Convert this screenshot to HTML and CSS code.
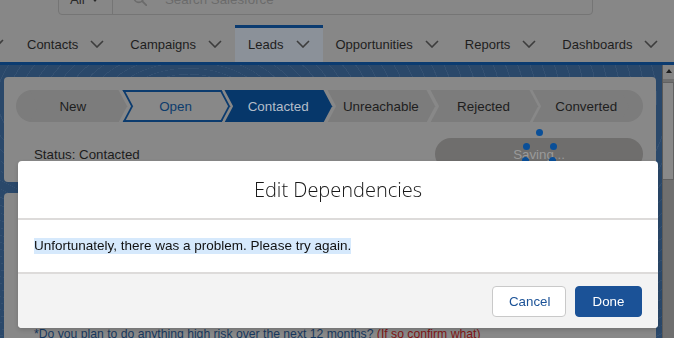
FILE: index.html
```html
<!DOCTYPE html>
<html lang="en">
<head>
    <meta charset="UTF-8">
    <meta name="viewport" content="width=device-width, initial-scale=1.0">
    <title>Lead - Edit Dependencies</title>
    <link rel="stylesheet" href="styles.css">
</head>
<body>
    <header class="top">
        <div class="search">
            <div class="scope">
                <span>All</span>
                <svg class="caret" viewBox="0 0 8 5" width="8" height="5"><path d="M0 0h8L4 5z" fill="currentColor"/></svg>
            </div>
            <div class="query">
                <svg viewBox="0 0 14 14" width="14" height="14"><circle cx="5.8" cy="5.8" r="4.6" fill="none" stroke="currentColor" stroke-width="1.6"/><path d="M9.2 9.2l4 4" stroke="currentColor" stroke-width="1.8" stroke-linecap="round"/></svg>
                <span>Search Salesforce</span>
            </div>
        </div>
    </header>

    <nav class="tabs">
        <span class="tab-tail"><svg class="chev" viewBox="0 0 14 8" width="14" height="8"><path d="M1 1l6 6 6-6" fill="none" stroke="currentColor" stroke-width="1.6"/></svg></span>
        <a class="tab">Contacts<svg class="chev" viewBox="0 0 14 8" width="14" height="8"><path d="M1 1l6 6 6-6" fill="none" stroke="currentColor" stroke-width="1.6"/></svg></a>
        <a class="tab">Campaigns<svg class="chev" viewBox="0 0 14 8" width="14" height="8"><path d="M1 1l6 6 6-6" fill="none" stroke="currentColor" stroke-width="1.6"/></svg></a>
        <a class="tab active">Leads<svg class="chev" viewBox="0 0 14 8" width="14" height="8"><path d="M1 1l6 6 6-6" fill="none" stroke="currentColor" stroke-width="1.6"/></svg></a>
        <a class="tab">Opportunities<svg class="chev" viewBox="0 0 14 8" width="14" height="8"><path d="M1 1l6 6 6-6" fill="none" stroke="currentColor" stroke-width="1.6"/></svg></a>
        <a class="tab">Reports<svg class="chev" viewBox="0 0 14 8" width="14" height="8"><path d="M1 1l6 6 6-6" fill="none" stroke="currentColor" stroke-width="1.6"/></svg></a>
        <a class="tab">Dashboards<svg class="chev" viewBox="0 0 14 8" width="14" height="8"><path d="M1 1l6 6 6-6" fill="none" stroke="currentColor" stroke-width="1.6"/></svg></a>
    </nav>

    <main class="workspace">
        <div class="columns">
            <section class="card highlights">
                <ol class="path">
                    <li class="step">New</li>
                    <li class="step step-open">Open</li>
                    <li class="step step-current">Contacted</li>
                    <li class="step">Unreachable</li>
                    <li class="step">Rejected</li>
                    <li class="step">Converted</li>
                </ol>
                <div class="status-row">
                    <span class="status">Status: Contacted</span>
                    <button class="saving">
                        Saving...
                        <span class="spinner">
                            <i class="dot d1"></i><i class="dot d2"></i><i class="dot d3"></i><i class="dot d4"></i><i class="dot d5"></i>
                        </span>
                    </button>
                </div>
            </section>
            <section class="card details">
                <p class="question">*Do you plan to do anything high risk over the next 12 months? <span class="hint">(If so confirm what)</span></p>
            </section>
        </div>
        <div class="scrollbar">
            <span class="arrow"></span>
            <span class="thumb"></span>
        </div>
    </main>

    <div class="modal">
        <div class="modal-header">
            <h2>Edit Dependencies</h2>
        </div>
        <div class="modal-body">
            <span class="message">Unfortunately, there was a problem. Please try again.</span>
        </div>
        <div class="modal-footer">
            <button class="btn btn-neutral">Cancel</button>
            <button class="btn btn-brand">Done</button>
        </div>
    </div>
</body>
</html>
```

FILE: styles.css
```css
body {
    margin: 0;
    height: 338px;
    overflow: hidden;
    background-color: #878787;
    font-family: "Liberation Sans", Arial, sans-serif;
    font-size: 13.3px;
    color: #1c1c1c;
}

/* global header */
.top {
    height: 25px;
    padding: 0 0 10px 58px;
    box-sizing: border-box;
    display: flex;
    align-items: flex-end;
}
.search {
    flex: none;
    display: flex;
    width: 535px;
    height: 32px;
    border: 1px solid #757575;
    border-radius: 4px;
    box-sizing: border-box;
}
.scope {
    width: 54px;
    padding-left: 11px;
    box-sizing: border-box;
    display: flex;
    align-items: center;
    gap: 6px;
    border-right: 1px solid #757575;
    color: #2a2a2a;
}
.query {
    display: flex;
    align-items: center;
    gap: 18px;
    padding-left: 20px;
    color: #6b6b6b;
}

/* app nav */
.tabs {
    display: flex;
    height: 37px;
    border-bottom: 3px solid #0b3b70;
    white-space: nowrap;
    overflow: hidden;
    font-size: 13px;
}
.tab-tail {
    display: flex;
    align-items: center;
    margin-left: -10px;
    padding: 0 10px 2px 0;
    color: #3d3d3d;
}
.tab {
    display: flex;
    align-items: center;
    gap: 12px;
    padding: 0 13px 2px;
    border-top: 3px solid transparent;
    color: #1e1e1e;
}
.tab.active {
    background-color: #8b9199;
    border-top-color: #0b3b70;
}
.chev {
    color: #3d3d3d;
}

/* workspace */
.workspace {
    display: flex;
    height: 273px;
    background:
        repeating-radial-gradient(ellipse at 28% 12%, transparent 0 11px, rgba(255,255,255,0.05) 11px 12px),
        #2a486a;
}
.columns {
    flex: 1;
    display: flex;
    flex-direction: column;
    gap: 11px;
    padding: 12px 6px 0 4px;
}
.card {
    background-color: #888;
    border-radius: 4px;
}
.highlights {
    padding: 13px 13px 12px 12px;
}

/* path */
.path {
    display: flex;
    height: 32px;
    margin: 0;
    padding: 0;
    list-style: none;
}
.step {
    position: relative;
    z-index: 0;
    flex: 1 1 0;
    display: flex;
    align-items: center;
    justify-content: center;
    margin: 0 7px 0 6px;
    color: #1e1e1e;
    font-size: 13.4px;
}
.step::before,
.step::after {
    content: "";
    position: absolute;
    z-index: -1;
    left: -4px;
    right: -5px;
    background-color: #7c7c7c;
    box-sizing: border-box;
}
.step::before {
    top: 0;
    height: calc(50% + 1px);
    transform: skewX(28deg);
}
.step::after {
    bottom: 0;
    height: 50%;
    transform: skewX(-28deg);
}
.step:first-child {
    margin-left: 0;
    padding-left: 12px;
    border-radius: 16px 0 0 16px;
    background-color: #7c7c7c;
}
.step:first-child::before,
.step:first-child::after {
    left: 18px;
}
.step:last-child {
    margin-right: 0;
    padding-right: 12px;
    border-radius: 0 16px 16px 0;
    background-color: #7c7c7c;
}
.step:last-child::before,
.step:last-child::after {
    right: 18px;
}
.step-open {
    color: #0d3c6d;
}
.step-open::before,
.step-open::after {
    background-color: #888;
    border: 2px solid #0b3b6e;
}
.step-open::before {
    border-bottom: 0;
}
.step-open::after {
    border-top: 0;
}
.step-current {
    color: #b3bdc9;
}
.step-current::before,
.step-current::after {
    background-color: #06376a;
}

.status-row {
    display: flex;
    align-items: center;
    justify-content: space-between;
    margin-top: 16px;
}
.status {
    padding-left: 18px;
    font-size: 13.3px;
}
.saving {
    position: relative;
    width: 208px;
    height: 32px;
    border: 0;
    border-radius: 16px;
    background-color: #6f6e6d;
    color: #9a9a9a;
    font: inherit;
}
.spinner {
    position: absolute;
    left: calc(50% - 20px);
    top: -10px;
    width: 40px;
    height: 40px;
}
.dot {
    position: absolute;
    width: 7px;
    height: 7px;
    margin: -3.5px 0 0 -3.5px;
    border-radius: 50%;
    background-color: #0a4f98;
}
.d1 { left: 20px; top: 4px; }
.d2 { left: 7px; top: 18px; }
.d3 { left: 34px; top: 18px; }
.d4 { left: 6px; top: 32px; }
.d5 { left: 33px; top: 32px; }

.details {
    flex: 1;
    padding: 132px 30px 0;
}
.question {
    margin: 0;
    color: #17385e;
    font-size: 12.2px;
    line-height: 18px;
}
.hint {
    color: #7f1515;
}

.scrollbar {
    width: 11px;
    display: flex;
    flex-direction: column;
    background-color: #6f6f6f;
    border-left: 1px solid #5a5a5a;
}
.arrow {
    height: 14px;
    background-color: #858585;
    position: relative;
}
.arrow::after {
    content: "";
    position: absolute;
    left: 3px;
    top: 4px;
    border: 3px solid transparent;
    border-bottom: 4px solid #1e1e1e;
    border-top: 0;
}
.thumb {
    height: 96px;
    margin-top: 3px;
    background-color: #898989;
    border: 1px solid #616161;
    border-left: 0;
}

/* modal */
.modal {
    position: fixed;
    left: 18px;
    top: 161px;
    width: 640px;
    display: flex;
    flex-direction: column;
    background-color: #fff;
    border-radius: 4px;
    overflow: hidden;
    box-shadow: 0 2px 4px rgba(0,0,0,0.16);
}
.modal-header {
    height: 57px;
    display: flex;
    align-items: center;
    justify-content: center;
    border-bottom: 2px solid #dddbda;
}
.modal-header h2 {
    margin: 0;
    font-family: "Open Sans", sans-serif;
    font-weight: 300;
    font-size: 20px;
    color: #181818;
}
.modal-body {
    height: 52px;
    display: flex;
    align-items: center;
    padding: 0 16px;
}
.message {
    background-color: #d6e9fc;
    color: #111;
    font-size: 13.5px;
    line-height: 16px;
}
.modal-footer {
    height: 54px;
    display: flex;
    align-items: center;
    justify-content: flex-end;
    gap: 9px;
    padding: 0 16px;
    border-top: 2px solid #dddbda;
    background-color: #f3f3f3;
}
.btn {
    height: 31px;
    padding: 0 16px;
    border-radius: 4px;
    font: inherit;
}
.btn-neutral {
    width: 74px;
    border: 1px solid #c9c9c9;
    background-color: #fff;
    color: #1b5297;
}
.btn-brand {
    width: 67px;
    border: 1px solid #1b5297;
    background-color: #1b5297;
    color: #fff;
}
```
